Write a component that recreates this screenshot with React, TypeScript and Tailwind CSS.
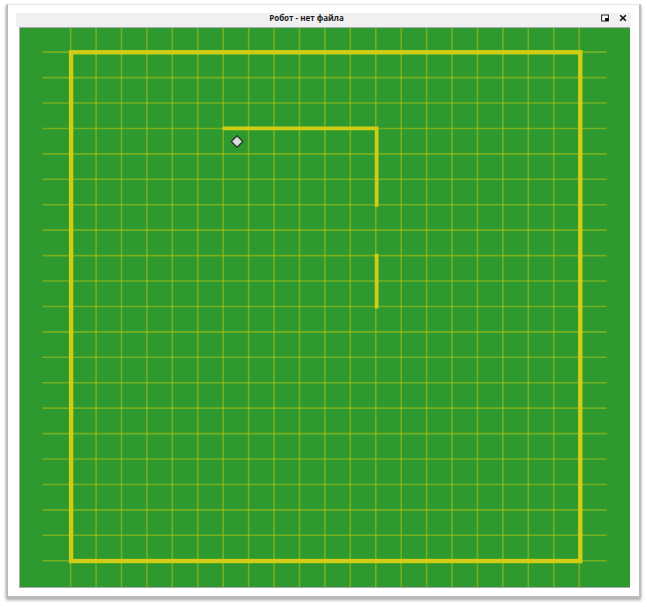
import React from "react";

const STEP = 25.47;
const LEFT = 50.7;
const TOP = 24.2;
const CELLS = 20;
const WALL = "#d0cd14";
const lines = Array.from({ length: CELLS + 1 }, (_, i) => i);

function Field() {
  return (
    <svg viewBox="0 0 611 560" className="block w-full bg-[#2e992e]" role="img">
      <g stroke="#bcc814" strokeOpacity="0.5" strokeWidth="1.6">
        {lines.map((i) => (
          <line key={`v${i}`} x1={LEFT + i * STEP} x2={LEFT + i * STEP} y1="0" y2="560" />
        ))}
        {lines.map((i) => (
          <line key={`h${i}`} x1="22.5" x2="587.5" y1={TOP + i * STEP} y2={TOP + i * STEP} />
        ))}
      </g>
      <rect x="51.2" y="24.3" width="510" height="509.6" fill="none" stroke={WALL} strokeWidth="4.4" />
      <path d="M202.8 100.6H357.2V179M357.2 226V281" fill="none" stroke={WALL} strokeWidth="3.8" />
      <path
        d="M217.4 107.9L223.2 113.7L217.4 119.5L211.6 113.7Z"
        fill="#dcdcdc"
        stroke="#2c3b2c"
        strokeWidth="1.4"
        strokeLinejoin="round"
      />
    </svg>
  );
}

export default function App() {
  return (
    <div className="min-h-screen bg-white pt-1 pr-1.5 pb-2 pl-1.5">
      <main className="border-2 border-t border-[#bcbcbc] border-t-[#e4e4e4] bg-white p-2 shadow-[0_2px_3px_rgba(0,0,0,0.35)]">
        <header className="flex h-3.5 items-start bg-[#f0f0f0] pr-1">
          <h1 className="flex-1 text-center font-['Open_Sans','Noto_Sans',sans-serif] text-[8px] leading-[10px] font-bold text-[#1c1c1c]">
            Робот - нет файла
          </h1>
          <div className="flex h-2.5 items-center gap-2.5 pl-1">
            <button type="button" aria-label="Свернуть" className="size-2">
              <svg viewBox="0 0 8 8" className="block size-2">
                <rect x="0.6" y="1" width="6.8" height="6" fill="#fff" stroke="#222" strokeWidth="1" />
                <rect x="4" y="4" width="3.5" height="3" fill="#111" />
              </svg>
            </button>
            <button type="button" aria-label="Закрыть" className="size-2">
              <svg viewBox="0 0 8 8" className="block size-2">
                <path d="M1.2 1.2L6.8 6.8M6.8 1.2L1.2 6.8" stroke="#111" strokeWidth="1.6" />
              </svg>
            </button>
          </div>
        </header>
        <div className="pr-px pl-[3px]">
          <div className="border-t border-b border-l border-[#a9a9b0]">
            <Field />
          </div>
        </div>
      </main>
    </div>
  );
}
